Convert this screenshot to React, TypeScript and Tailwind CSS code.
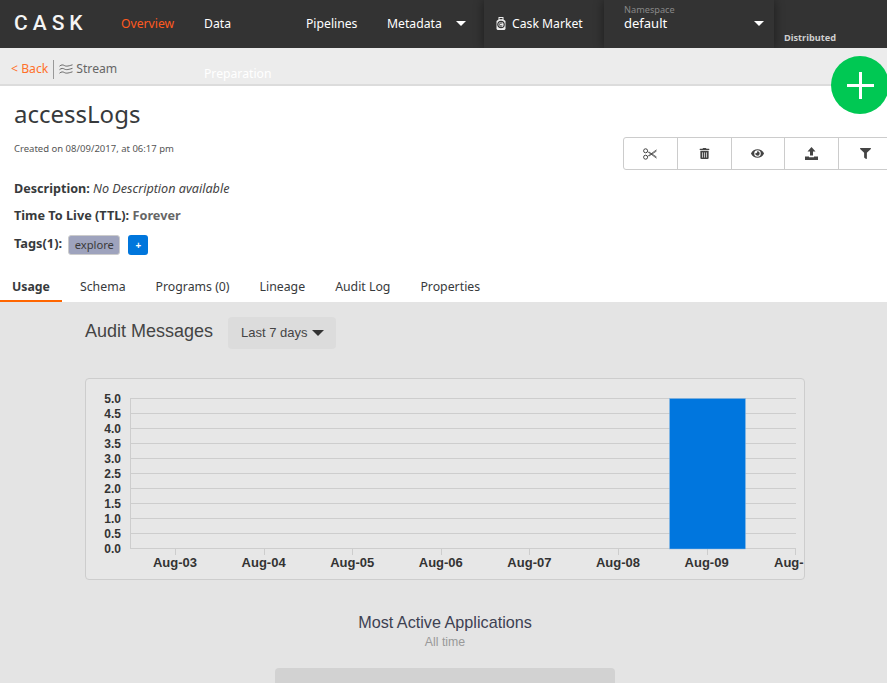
import { FaEye, FaFilter, FaTrashAlt } from "react-icons/fa";

const sans = "font-['Noto_Sans',sans-serif]";
const arial = "font-['Liberation_Sans',Arial,sans-serif]";

function Caret({ className }: { className: string }) {
  return <span className={`block h-0 w-0 border-x-[5px] border-t-[5px] border-x-transparent ${className}`} />;
}

function Market() {
  return (
    <svg width="12" height="15" viewBox="0 0 12 15" className="mr-[5px]">
      <path d="M3.5 1h5v2.5l2 1.5v8l-1 1h-7l-1-1V5l2-1.5z" fill="#eee" />
      <circle cx="6" cy="8.5" r="3.2" fill="none" stroke="#333" strokeWidth="1.2" />
      <path d="M7.2 7.4a1.6 1.6 0 1 0 0 2.2" fill="none" stroke="#333" strokeWidth="1" />
      <rect x="4.5" y="2" width="3" height="1.2" fill="#333" />
    </svg>
  );
}

function Scissors() {
  return (
    <svg width="14" height="12" viewBox="0 0 14 12" fill="none" stroke="#444" strokeWidth="1">
      <circle cx="2.6" cy="2.8" r="2" />
      <circle cx="2.6" cy="9.2" r="2" />
      <path d="M4.3 3.4 13.5 10.2M4.3 8.6 13.5 1.8M6 4 13.5 9M6 8 13.5 3" strokeWidth="0.8" />
    </svg>
  );
}

function Publish() {
  return (
    <svg width="13" height="13" viewBox="0 0 13 13" fill="#444">
      <path d="M6.5 0 10.5 4.5H8V8.5H5V4.5H2.5z" />
      <path d="M0 9.5h4v.8h5v-.8h4V13H0z" />
    </svg>
  );
}

function StreamIcon() {
  return (
    <svg width="14" height="11" viewBox="0 0 14 11" fill="none" stroke="#666" strokeWidth="1" className="mr-[3px]">
      <path d="M.5 2.2c2-1.8 3.5-1.4 5 -.6s3 .8 8-.8" />
      <path d="M.5 5.7c2-1.8 3.5-1.4 5-.6s3 .8 8-.8" />
      <path d="M.5 9.2c2-1.8 3.5-1.4 5-.6s3 .8 8-.8" />
    </svg>
  );
}

const ylabels = ["5.0", "4.5", "4.0", "3.5", "3.0", "2.5", "2.0", "1.5", "1.0", "0.5", "0.0"];
const xticks = [
  ["Aug-03", 89],
  ["Aug-04", 177.6],
  ["Aug-05", 266.2],
  ["Aug-06", 354.8],
  ["Aug-07", 443.4],
  ["Aug-08", 532],
  ["Aug-09", 620.6],
] as const;

function Chart() {
  return (
    <svg width="718" height="200" className="block" style={{ fontFamily: "'Liberation Sans', Arial, sans-serif" }}>
      {ylabels.map((l, i) => (
        <g key={l}>
          <line x1="44" x2="710" y1={19.5 + i * 15} y2={19.5 + i * 15} stroke="#cdcdcd" />
          <text x="35" y={24 + i * 15} textAnchor="end" fontSize="12" fontWeight="700" fill="#333">
            {l}
          </text>
        </g>
      ))}
      <line x1="44.5" x2="44.5" y1="19" y2="170" stroke="#cdcdcd" />
      {xticks.map(([l, x]) => (
        <g key={l}>
          <line x1={Math.round(x) + 0.5} x2={Math.round(x) + 0.5} y1="170" y2="176" stroke="#cdcdcd" />
          <text x={x} y="188" textAnchor="middle" fontSize="13" fontWeight="700" fill="#333">
            {l}
          </text>
        </g>
      ))}
      <line x1="709.5" x2="709.5" y1="170" y2="176" stroke="#cdcdcd" />
      <text x="688" y="188" fontSize="13" fontWeight="700" fill="#333">
        Aug-
      </text>
      <rect x="583.5" y="19.5" width="76" height="150.5" fill="#0076de" stroke="#8fbbe3" strokeWidth="0.5" />
    </svg>
  );
}

const tabs = ["Schema", "Programs (0)", "Lineage", "Audit Log", "Properties"];

export default function App() {
  return (
    <div className={`relative h-[683px] w-[887px] overflow-hidden bg-white ${sans} text-[#373a3c]`}>
      <nav className="flex h-12 bg-[#333333] text-[12.2px] leading-[50px] text-white">
        <div className="ml-[14px] w-[107px] font-['Roboto',sans-serif] text-[21px] font-medium leading-[46px] tracking-[5px] text-[#f5f5f5]">CASK</div>
        <a className="-mt-[1px] w-[83px] text-[#ff5a1f]">Overview</a>
        <a className="-mt-[1px] w-[102px]">
          Data
          <br />
          Preparation
        </a>
        <a className="-mt-[1px] w-[81px]">Pipelines</a>
        <a className="flex h-[47px] w-[85px] items-center">
          <span className="w-[69px]">Metadata</span>
          <Caret className="border-t-white" />
        </a>
        <div className="flex h-12 overflow-hidden px-3">
          <a className="relative flex h-12 w-[120px] items-center bg-[#333] pb-[1px] pl-[11px] shadow-[0_0_10px_rgba(0,0,0,0.45)]">
            <Market />
            Cask Market
          </a>
          <div className="relative h-12 w-[170px] bg-[#333] pl-5 shadow-[0_0_10px_rgba(0,0,0,0.45)]">
            <div className="mt-[3px] text-[9.2px] leading-[13px] text-[#888]">Namespace</div>
            <div className="flex items-center text-[13px] leading-[14px]">
              <span className="w-[130px]">default</span>
              <Caret className="mt-px border-x-[4px] border-t-[4px] border-t-white" />
            </div>
          </div>
        </div>
        <div className="relative -ml-[2px] mt-[30px] text-[9.2px] font-bold leading-[15px] text-[#cfcfcf]">Distributed</div>
      </nav>

      <div className="flex h-[38px] items-center border-b-2 border-[#dcdcdc] bg-[#ececec] pl-[11px] pt-[6px] text-[12.2px]">
        <span className="text-[#ff7029]">&lt;&nbsp;Back</span>
        <span className="mx-[5px] h-[19px] w-px bg-[#999]" />
        <StreamIcon />
        <span className="text-[#666]">Stream</span>
      </div>

      <div className="flex h-[216px] flex-col bg-white">
        <h1 className="ml-[14px] mt-[13px] text-[24px] font-normal leading-[30px] text-[#373a3c]">accessLogs</h1>
        <div className="relative">
          <p className="ml-[14px] mt-[13px] text-[9.5px] leading-[13px] text-[#555]">Created on 08/09/2017, at 06:17 pm</p>
          <div className="absolute left-[623px] top-[8px] flex h-[33px] w-[270px] rounded-l-[3px] border border-[#ccc] bg-white">
            <span className="flex w-[53px] items-center justify-center">
              <Scissors />
            </span>
            <span className="flex w-[54px] items-center justify-center border-l border-[#ccc] text-[11px] text-[#444]">
              <FaTrashAlt />
            </span>
            <span className="flex w-[54px] items-center justify-center border-l border-[#ccc] text-[13px] text-[#444]">
              <FaEye />
            </span>
            <span className="flex w-[54px] items-center justify-center border-l border-[#ccc]">
              <Publish />
            </span>
            <span className="flex w-[54px] items-center justify-center border-l border-[#ccc] text-[11px] text-[#444]">
              <FaFilter />
            </span>
          </div>
        </div>
        <p className="ml-[14px] mt-[26px] text-[12.6px] leading-[16px]">
          <b className="font-bold">Description:</b> <i className="text-[#444]">No Description available</i>
        </p>
        <p className="ml-[14px] mt-[10px] text-[12.7px] leading-[16px]">
          <b className="font-bold">Time To Live (TTL):</b> <b className="font-bold text-[#666]">Forever</b>
        </p>
        <div className="ml-[14px] mt-[11px] flex h-5 items-start text-[12.8px]">
          <b className="mt-[1px] font-bold leading-[16px]">Tags(1):</b>
          <span className="ml-[6px] mt-px rounded-[3px] border border-[#ccc] bg-[#9ea3bd] px-[5.5px] text-[11.2px] leading-[18px] text-[#3a3a3a]">explore</span>
          <span className="ml-2 mt-px flex h-5 w-5 items-center justify-center rounded-[3px] bg-[#0076dc] text-[10px] font-bold text-white">+</span>
        </div>
        <div className="mt-auto flex h-[33px] text-[12.3px] leading-[35px]">
          <span className="border-b-2 border-[#ff6600] px-3 font-bold">Usage</span>
          {tabs.map((t) => (
            <span key={t} className="ml-[6px] px-3">
              {t}
            </span>
          ))}
        </div>
      </div>

      <main className={`h-[381px] bg-[#e4e4e4] ${arial}`}>
        <div className="ml-[85px] flex h-[76px] items-start pt-[15px]">
          <h2 className="text-[18px] font-normal leading-[28px] text-[#444]">Audit Messages</h2>
          <div className="ml-[15px] flex h-8 w-[108px] items-center rounded-[4px] bg-[#dcdcdc] pl-[13px] text-[13px] text-[#444]">
            Last 7 days
            <Caret className="ml-[4px] border-x-[6px] border-t-[6px] border-t-[#333]" />
          </div>
        </div>
        <div className="ml-[85px] h-[202px] w-[720px] overflow-hidden rounded-[4px] border border-[#cdcdcd] bg-[#e7e7e7]">
          <Chart />
        </div>
        <div className="mt-[32px] pl-[3px] text-center text-[16.2px] leading-[20px] text-[#3d4152]">Most Active Applications</div>
        <div className="mt-[2px] pl-[3px] text-center text-[12.3px] leading-[16px] text-[#999]">All time</div>
        <div className="ml-[275px] mt-[18px] h-[40px] w-[340px] rounded-[4px] bg-[#d2d2d2]" />
      </main>

      <div className="absolute left-[831px] top-[56px] flex h-[58px] w-[58px] items-center justify-center rounded-full bg-[#00c853] text-white">
        <svg width="27" height="27" viewBox="0 0 27 27" fill="#fff">
          <rect x="12" width="3" height="27" />
          <rect y="12" width="27" height="3" />
        </svg>
      </div>
    </div>
  );
}
